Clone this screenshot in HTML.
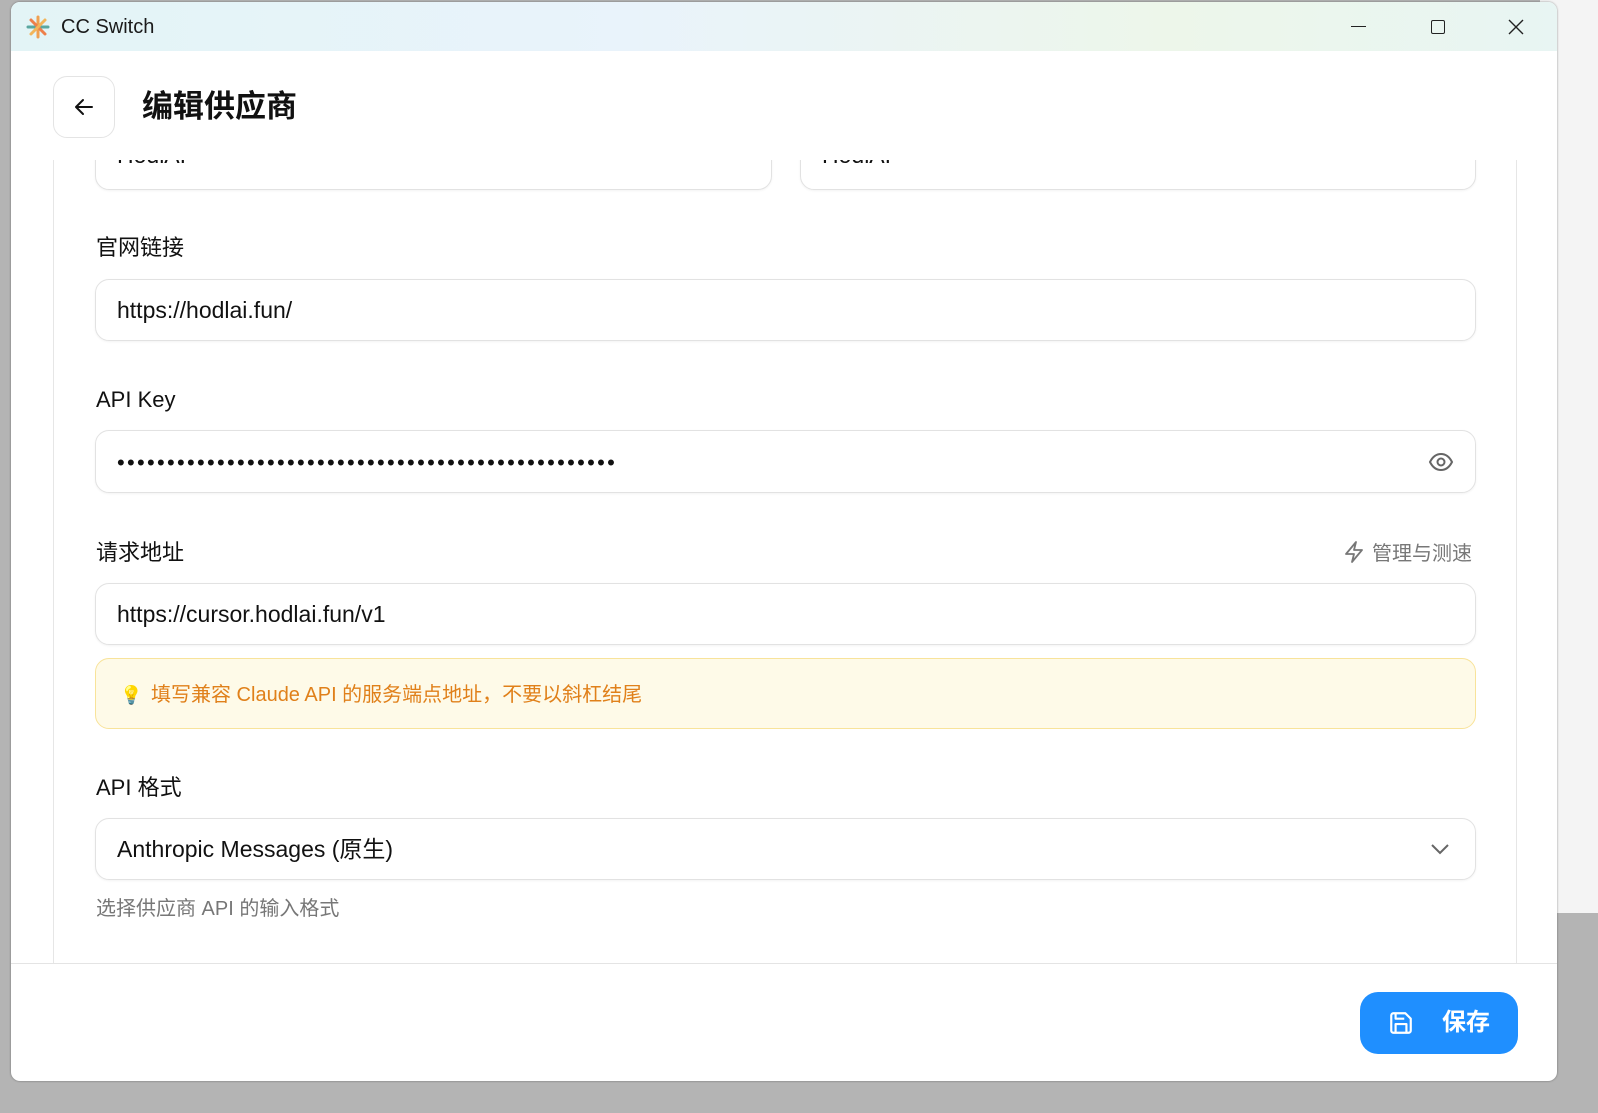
<!DOCTYPE html>
<html><head><meta charset="utf-8"><style>
*{box-sizing:border-box;margin:0;padding:0}
body{width:1598px;height:1113px;background:#b4b4b4;position:relative;overflow:hidden;font-family:"Liberation Sans","Noto Sans CJK SC",sans-serif;color:#111;line-height:1}
.bgapp{position:absolute;left:1540px;top:0;width:58px;height:913px;background:#f4f4f4}
.win{position:absolute;left:11px;top:2px;width:1546px;height:1079px;background:#fff;border-radius:9px;overflow:hidden;box-shadow:0 0 2px rgba(0,0,0,.4)}
.tb{position:absolute;left:0;top:0;right:0;height:49px;background:linear-gradient(90deg,#e3f4f6,#e9f3fb 40%,#edf6ea 75%,#e8f5f3)}
.tb .t{position:absolute;left:50px;top:15px;font-size:20px;color:#1a1a1a}
.a{position:absolute}
.lbl{position:absolute;left:85px;font-size:22px;color:#111;height:24px;line-height:24px}
.inp{position:absolute;left:84px;width:1381px;height:62px;border:1px solid #e2e2e2;border-radius:14px;box-shadow:0 1px 2px rgba(0,0,0,.05);font-size:23px;padding:0 21px;color:#111;display:flex;align-items:center}
</style></head><body>
<div class="bgapp"></div>
<div class="win">
 <div class="tb">
  <svg class="a" style="left:15px;top:13px" width="24" height="24" viewBox="0 0 24 24">
   <g stroke-width="3" stroke-linecap="round">
   <line x1="12" y1="2" x2="12" y2="22" stroke="#f0a050"/>
   <line x1="2" y1="12" x2="22" y2="12" stroke="#5aa7a0"/>
   <line x1="5" y1="5" x2="19" y2="19" stroke="#ee7f4a"/>
   <line x1="19" y1="5" x2="5" y2="19" stroke="#f2b55a"/></g></svg>
  <div class="t">CC Switch</div>
  <div class="a" style="left:1340px;top:24px;width:15px;height:1px;background:#222"></div>
  <div class="a" style="left:1420px;top:18px;width:14px;height:14px;border:1.5px solid #222;border-radius:2px"></div>
  <svg class="a" style="left:1497px;top:17px" width="16" height="16"><path d="M1 1L15 15M15 1L1 15" stroke="#222" stroke-width="1.4"/></svg>
 </div>
 <div class="a" style="left:42px;top:74px;width:62px;height:62px;border:1px solid #e4e4e4;border-radius:14px"></div>
 <svg class="a" style="left:62px;top:94px" width="22" height="22" viewBox="0 0 22 22"><path d="M19 11H3M10 4L3 11L10 18" fill="none" stroke="#111" stroke-width="2" stroke-linecap="round" stroke-linejoin="round"/></svg>
 <div class="a" style="left:131px;top:88px;font-size:31px;font-weight:bold;line-height:34px">编辑供应商</div>

 <div class="a" style="left:0;top:158px;width:1546px;height:803px;overflow:hidden">
  <div class="a" style="left:42px;top:0;width:1px;height:803px;background:#e6e6e6"></div>
  <div class="a" style="left:1505px;top:0;width:1px;height:803px;background:#e6e6e6"></div>
  <div class="a" style="left:84px;top:-40px;width:677px;height:70px;border:1px solid #e2e2e2;border-radius:14px;box-shadow:0 1px 2px rgba(0,0,0,.05)"><span class="a" style="left:21px;top:23px;font-size:23px">HodlAI</span></div>
  <div class="a" style="left:789px;top:-40px;width:676px;height:70px;border:1px solid #e2e2e2;border-radius:14px;box-shadow:0 1px 2px rgba(0,0,0,.05)"><span class="a" style="left:21px;top:23px;font-size:23px">HodlAI</span></div>
 </div>

 <div class="lbl" style="top:234px">官网链接</div>
 <div class="inp" style="top:277px">https://hodlai.fun/</div>
 <div class="lbl" style="top:386px;font-weight:500">API Key</div>
 <div class="inp" style="top:428px;height:63px;letter-spacing:2.3px;font-size:22px"><span style="position:relative;top:1px">••••••••••••••••••••••••••••••••••••••••••••••••••</span></div>
 <svg class="a" style="left:1417px;top:450px" width="26" height="20" viewBox="0 0 26 20"><path d="M2 10C5 4 9 2 13 2S21 4 24 10C21 16 17 18 13 18S5 16 2 10Z" fill="none" stroke="#666" stroke-width="2"/><circle cx="13" cy="10" r="3.5" fill="none" stroke="#666" stroke-width="2"/></svg>
 <div class="lbl" style="top:539px">请求地址</div>
 <svg class="a" style="left:1332px;top:538px" width="22" height="24" viewBox="0 0 22 24"><path d="M13 2L3 14H11L9 22L19 10H11Z" fill="none" stroke="#777" stroke-width="1.8" stroke-linejoin="round"/></svg>
 <div class="a" style="left:1361px;top:541px;font-size:20px;color:#777;line-height:22px">管理与测速</div>
 <div class="inp" style="top:581px">https://cursor.hodlai.fun/v1</div>
 <div class="a" style="left:84px;top:656px;width:1381px;height:71px;background:#fefae8;border:1px solid #f8e39a;border-radius:14px"></div>
 <div class="a" style="left:109px;top:682px;font-size:18px;line-height:22px">💡</div>
 <div class="a" style="left:140px;top:682px;font-size:20px;color:#e0801a;line-height:22px">填写兼容 Claude API 的服务端点地址，不要以斜杠结尾</div>
 <div class="lbl" style="top:774px">API 格式</div>
 <div class="inp" style="top:816px">Anthropic Messages (原生)</div>
 <svg class="a" style="left:1419px;top:840px" width="20" height="14"><path d="M2 3L10 11L18 3" fill="none" stroke="#666" stroke-width="2"/></svg>
 <div class="a" style="left:85px;top:896px;font-size:20px;color:#777;line-height:22px">选择供应商 API 的输入格式</div>

 <div class="a" style="left:0;top:961px;width:1546px;height:1px;background:#e4e4e4"></div>
 <div class="a" style="left:1349px;top:990px;width:158px;height:62px;background:#1f8fff;border-radius:18px"></div>
 <svg class="a" style="left:1377px;top:1008px" width="26" height="26" viewBox="0 0 24 24"><path d="M5 3H16L21 8V19A2 2 0 0 1 19 21H5A2 2 0 0 1 3 19V5A2 2 0 0 1 5 3Z M7 3V8H15 M7 21V13H17V21" fill="none" stroke="#fff" stroke-width="2" stroke-linejoin="round"/></svg>
 <div class="a" style="left:1431px;top:1008px;font-size:24px;color:#fff;font-weight:bold;line-height:26px">保存</div>
</div>
</body></html>
